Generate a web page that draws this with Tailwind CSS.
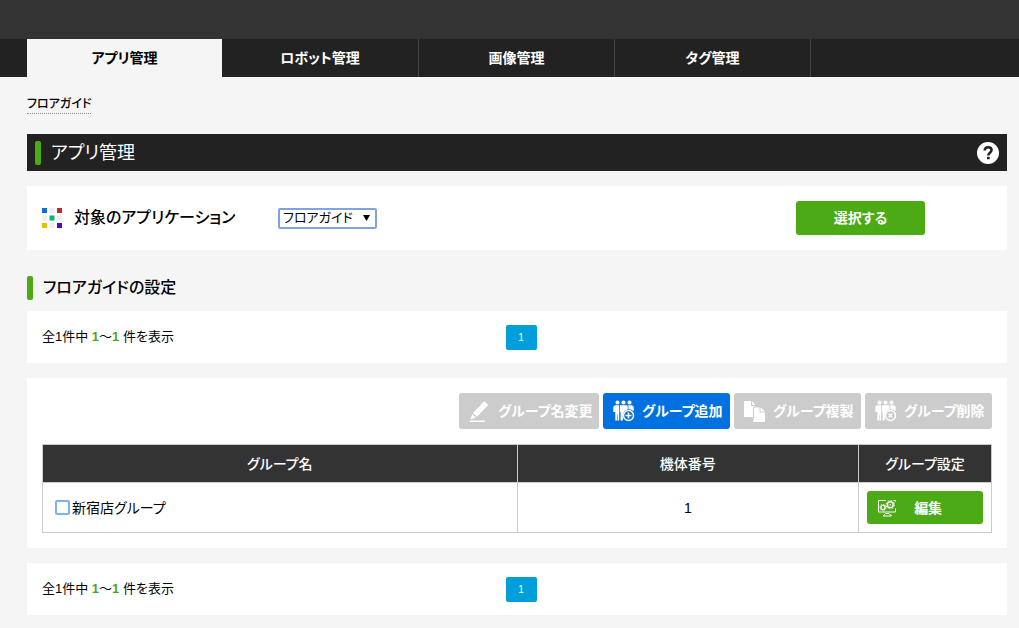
<!DOCTYPE html>
<html lang="ja">
<head>
<meta charset="utf-8">
<meta name="viewport" content="width=device-width, initial-scale=1">
<title>アプリ管理</title>
<script src="https://cdn.jsdelivr.net/npm/@tailwindcss/browser@4"></script>
</head>
<body class="min-h-screen bg-[#f5f5f5] text-sm leading-5 text-black font-['Liberation_Sans','Noto_Sans_CJK_JP',sans-serif] [font-feature-settings:'palt']">
<svg class="hidden" aria-hidden="true">
  <symbol id="people" viewBox="0 0 22 22">
    <g fill="currentColor">
      <circle cx="4.500" cy="2.500" r="2"/><circle cx="10.500" cy="2.500" r="2"/><circle cx="16.500" cy="2.500" r="2"/>
      <path d="M2 5.200h4.200v15.300H4.600v-6h-.5v6H2.300V12H.3V6.700zM7 5.200h7l.7 1v3.400a6.500 6.500 0 0 0-4.900 5.400v5.500H7.600V12H6.900zM15.300 5.200H19l1.700 1.500v4.500a7 7 0 0 0-5.200-2z"/>
    </g>
    <circle cx="15.500" cy="15.500" r="5" fill="none" stroke="currentColor" stroke-width="1.500"/>
  </symbol>
</svg>

<header class="h-[39px] bg-[#333]"></header>
<nav class="flex bg-[#222] pl-[27px] text-center font-bold leading-[38px] text-white">
  <a href="#" class="w-[195px] bg-[#f5f5f5] text-black">アプリ管理</a>
  <a href="#" class="w-[197px] border-r border-[#444]">ロボット管理</a>
  <a href="#" class="w-[196px] border-r border-[#444]">画像管理</a>
  <a href="#" class="w-[196px] border-r border-[#444]">タグ管理</a>
</nav>

<main class="pr-3 pl-[27px]">
  <div class="flex h-[57px] items-start pt-[19px]">
    <a href="#" class="border-b border-dotted border-[#888] text-xs leading-[17px] font-medium">フロアガイド</a>
  </div>

  <div class="flex h-[37px] items-center bg-[#222] px-2 text-white">
    <span class="h-6 w-1.5 rounded-xs bg-[#4caa14]"></span>
    <h1 class="ml-2.5 flex-1 text-lg">アプリ管理</h1>
    <button type="button" aria-label="ヘルプ">
      <svg class="size-[22px]" viewBox="0 0 22 22"><circle cx="11" cy="11" r="11" fill="#fff"/><path d="M7.700 8.600c0-2.300 1.500-3.400 3.500-3.400s3.400 1.100 3.400 2.900c0 2.600-3.300 2.700-3.300 5.300" fill="none" stroke="#222" stroke-width="2.500"/><rect x="10" y="14.700" width="2.600" height="2.600" rx=".6" fill="#222"/></svg>
    </button>
  </div>

  <section class="mt-[15px] flex h-16 items-center bg-white px-[15px]">
    <svg class="size-5" viewBox="0 0 20 20" aria-hidden="true">
      <path fill="#eee" d="M7.500 0h5v5h-5zM0 7.500h5v5H0zM15 7.500h5v5h-5zM7.500 15h5v5h-5z"/>
      <path fill="#0d6fd0" d="M0 0h5v5H0z"/><path fill="#c1272d" d="M15 0h5v5h-5z"/><path fill="#0bb27a" d="M7.500 7.500h5v5h-5z"/><path fill="#e5bd0c" d="M0 15h5v5H0z"/><path fill="#5208c0" d="M15 15h5v5h-5z"/>
    </svg>
    <label for="app" class="ml-3 w-[204px] text-base font-medium">対象のアプリケーション</label>
    <span class="relative">
      <select id="app" class="block h-[21px] w-[99px] appearance-none rounded-xs border-2 border-[#7fa5e0] bg-white pl-[3px] text-[13px] leading-4"><option>フロアガイド</option></select>
      <svg class="pointer-events-none absolute top-[7px] right-[7px] h-1.5 w-[7px]" viewBox="0 0 7 6" aria-hidden="true"><path d="M0 0h7L3.500 6z"/></svg>
    </span>
    <button type="button" class="mr-[67px] ml-auto h-[34px] w-[129px] rounded-[3px] bg-[#4caa14] font-bold text-white">選択する</button>
  </section>

  <div class="mt-[26px] flex h-6 items-center">
    <span class="h-6 w-1.5 rounded-xs bg-[#4caa14]"></span>
    <h2 class="ml-2.5 text-base font-medium">フロアガイドの設定</h2>
  </div>

  <section class="mt-[11px] grid h-[52px] grid-cols-[1fr_auto_1fr] items-center bg-white px-[15px]">
    <p class="text-[13px]">全1件中 <b class="text-[#4caa14]">1</b>～<b class="text-[#4caa14]">1</b> 件を表示</p>
    <a href="#" class="ml-2 w-[31px] rounded-xs bg-[#009fdc] text-center text-[10px] leading-[25px] text-white">1</a>
  </section>

  <section class="mt-[15px] bg-white p-[15px]">
    <div class="flex justify-end gap-1 font-bold text-white">
      <button type="button" disabled class="flex h-9 w-[140px] items-center rounded-[3px] bg-[#ccc] pl-2.5">
        <svg class="size-[22px]" viewBox="0 0 22 22" fill="currentColor" aria-hidden="true"><path d="M15.300 1.200l4 3.800L8 16.800 4 13zM3.200 14l3.800 3.600-5.500 1.800zM1 20.500h15V22H1z"/></svg>
        <span class="ml-[7px]">グループ名変更</span>
      </button>
      <button type="button" class="flex h-9 w-[127px] items-center rounded-[3px] bg-[#0071e1] pl-2.5">
        <svg class="size-[22px]" viewBox="0 0 22 22" aria-hidden="true"><use href="#people"/><path d="M12.500 15.500h6M15.500 12.500v6" stroke="currentColor" stroke-width="1.500"/></svg>
        <span class="ml-[7px]">グループ追加</span>
      </button>
      <button type="button" disabled class="flex h-9 w-[127px] items-center rounded-[3px] bg-[#ccc] pl-2.5">
        <svg class="size-[22px]" viewBox="0 0 22 22" fill="currentColor" aria-hidden="true"><path d="M0 1h7v5h4v.5H9V17H0zM8 1l3.500 4H8zM10 7.500h5.500v5H21V22H9.500v-4H10zM16.500 7.500l4.500 4h-4.500z"/></svg>
        <span class="ml-[7px]">グループ複製</span>
      </button>
      <button type="button" disabled class="flex h-9 w-[127px] items-center rounded-[3px] bg-[#ccc] pl-2.5">
        <svg class="size-[22px]" viewBox="0 0 22 22" aria-hidden="true"><use href="#people"/><path d="M13.700 13.700l3.600 3.600M17.300 13.700l-3.600 3.600" stroke="currentColor" stroke-width="1.300"/></svg>
        <span class="ml-[7px]">グループ削除</span>
      </button>
    </div>

    <table class="mt-[15px] w-full table-fixed border-collapse">
      <colgroup><col class="w-1/2"><col class="w-[36%]"><col class="w-[14%]"></colgroup>
      <thead>
        <tr class="h-[38px] bg-[#333] text-white">
          <th class="border border-[#ccc] font-medium">グループ名</th>
          <th class="border border-[#ccc] font-medium">機体番号</th>
          <th class="border border-[#ccc] font-medium">グループ設定</th>
        </tr>
      </thead>
      <tbody>
        <tr class="h-[50px]">
          <td class="border border-[#ccc] pl-3">
            <label class="flex items-center gap-0.5"><input type="checkbox" class="size-[15px] appearance-none rounded-xs border-2 border-[#7fb2e8] bg-white checked:bg-[#7fb2e8]">新宿店グループ</label>
          </td>
          <td class="border border-[#ccc] text-center">1</td>
          <td class="border border-[#ccc] px-2">
            <button type="button" class="flex h-[33px] w-full items-center rounded-[3px] bg-[#4caa14] pl-2.5 font-bold text-white">
              <svg class="h-[18px] w-5" viewBox="0 0 20 18" fill="none" stroke="currentColor" aria-hidden="true"><path d="M9 1.500H1.500v11.500h17V9.500M16.500 1.500h2v1"/><circle cx="6" cy="8.500" r="2.100" stroke-width="1.300"/><circle cx="6" cy="8.500" r="3.100" stroke-dasharray="1.200 1.200"/><circle cx="13.300" cy="5.700" r="2.900" stroke-width="1.400"/><circle cx="13.300" cy="5.700" r="4.100" stroke-dasharray="1.600 1.600"/><circle cx="13.300" cy="5.700" r=".8" fill="currentColor" stroke="none"/><path d="M8.500 14.500h3.500l2.500 2.500h-8.500z"/></svg>
              <span class="ml-[17px]">編集</span>
            </button>
          </td>
        </tr>
      </tbody>
    </table>
  </section>

  <section class="mt-[15px] grid h-[52px] grid-cols-[1fr_auto_1fr] items-center bg-white px-[15px]">
    <p class="text-[13px]">全1件中 <b class="text-[#4caa14]">1</b>～<b class="text-[#4caa14]">1</b> 件を表示</p>
    <a href="#" class="ml-2 w-[31px] rounded-xs bg-[#009fdc] text-center text-[10px] leading-[25px] text-white">1</a>
  </section>
</main>
</body>
</html>
